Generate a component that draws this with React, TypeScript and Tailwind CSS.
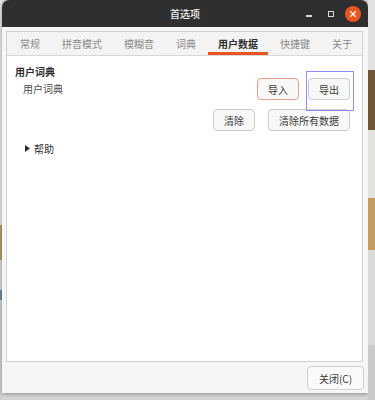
import { X } from 'lucide-react'

const tabs = ['常规', '拼音模式', '模糊音', '词典', '用户数据', '快捷键', '关于']

function Btn({ label, className = '' }: { label: string; className?: string }) {
  return (
    <button
      className={`h-[22px] rounded-[4px] border bg-[#f8f8f8] text-[10px] text-[#3a3a3a] flex items-center justify-center whitespace-nowrap ${className}`}
    >
      {label}
    </button>
  )
}

export default function App() {
  return (
    <div
      className="w-[375px] h-[400px] overflow-hidden flex bg-[#d6d6d6]"
      style={{ fontFamily: '"Noto Sans CJK SC", "Noto Sans", sans-serif' }}
    >
      {/* desktop strip on the left */}
      <div className="w-[2px] flex flex-col">
        <div className="h-[225px] bg-[#e4e4e4]" />
        <div className="h-[35px] bg-[#b89868]" />
        <div className="h-[30px] bg-[#d8d8d8]" />
        <div className="h-[10px] bg-[#7088a8]" />
        <div className="flex-1 bg-[#d0d0d0]" />
      </div>

      {/* the dialog */}
      <div className="w-[366px] h-[393px] flex flex-col shadow-[0_1px_4px_rgba(0,0,0,0.35)] rounded-t-[7px]">
        <div className="relative h-[27px] bg-[#2f2f2f] rounded-t-[7px] flex items-center justify-center">
          <span className="text-[10px] text-[#f2f2f2] font-medium">首选项</span>
          <div className="absolute right-[4px] top-0 h-full flex items-center">
            <div className="w-[22px] flex justify-center">
              <div className="w-[6px] h-[1.5px] bg-[#d8d8d8] mt-[5px]" />
            </div>
            <div className="w-[22px] flex justify-center">
              <div className="w-[6px] h-[6px] border border-[#d8d8d8]" />
            </div>
            <div className="w-[22px] flex justify-center">
              <div className="w-[16px] h-[16px] rounded-full bg-[#e9561f] flex items-center justify-center">
                <X size={10} strokeWidth={2.6} color="#ffffff" />
              </div>
            </div>
          </div>
        </div>

        <div className="flex-1 bg-[#f6f6f6] flex flex-col pt-[4px] pl-[4px] pr-[5px]">
          {/* notebook */}
          <div className="h-[331px] border border-[#d0d0d0] flex flex-col">
            <div className="h-[24px] bg-[#f3f3f3] border-b border-[#d8d8d8] flex items-stretch pl-[3px] gap-[2px]">
              {tabs.map((t) => {
                const active = t === '用户数据'
                return (
                  <div
                    key={t}
                    className={`shrink-0 whitespace-nowrap px-[10px] pt-[3px] flex items-center text-[10px] border-b-[3px] ${
                      active
                        ? 'border-[#e95420] text-[#2e2e2e] font-bold'
                        : 'border-transparent text-[#8a8a8a]'
                    }`}
                  >
                    {t}
                  </div>
                )
              })}
            </div>

            <div className="flex-1 bg-white pl-[8px] pr-[12px] pt-[9px] flex flex-col">
              <div className="text-[10px] font-bold text-[#2e2e2e] leading-[14px]">用户词典</div>
              <div className="flex items-center mt-[-1px]">
                <span className="ml-[8px] text-[10px] text-[#4a4a4a] flex-1 mt-[-2px]">用户词典</span>
                <Btn label="导入" className="w-[42px] border-[#e9a08c]" />
                <div className="relative ml-[9px]">
                  <Btn label="导出" className="w-[42px] border-[#cbcbcb]" />
                  <div className="absolute left-[-2px] top-[-7px] w-[48px] h-[40px] border border-[#8c8cff]" />
                </div>
              </div>
              <div className="flex justify-end mt-[9px]">
                <Btn label="清除" className="w-[42px] border-[#cbcbcb]" />
                <Btn label="清除所有数据" className="w-[82px] ml-[13px] border-[#cbcbcb]" />
              </div>
              <div className="flex items-center mt-[10px] ml-[10px]">
                <svg width="5" height="7" viewBox="0 0 5 7">
                  <path d="M0 0 L5 3.5 L0 7 Z" fill="#2e2e2e" />
                </svg>
                <span className="ml-[4px] text-[10px] text-[#2e2e2e]">帮助</span>
              </div>
            </div>
          </div>

          <div className="flex justify-end mt-[4px]">
            <Btn label="关闭(C)" className="w-[57px] h-[24px] border-[#cfcfcf] bg-[#fafafa] mr-[-1px]" />
          </div>
        </div>
      </div>

      {/* desktop strip on the right */}
      <div className="w-[7px] flex flex-col">
        <div className="h-[70px] bg-[#e2e2e2]" />
        <div className="h-[60px] bg-[#6e5636]" />
        <div className="h-[68px] bg-[#e4e2de]" />
        <div className="h-[52px] bg-[#c49d5e]" />
        <div className="h-[95px] bg-[#dadada]" />
        <div className="flex-1 bg-[#cacaca]" />
      </div>
    </div>
  )
}
